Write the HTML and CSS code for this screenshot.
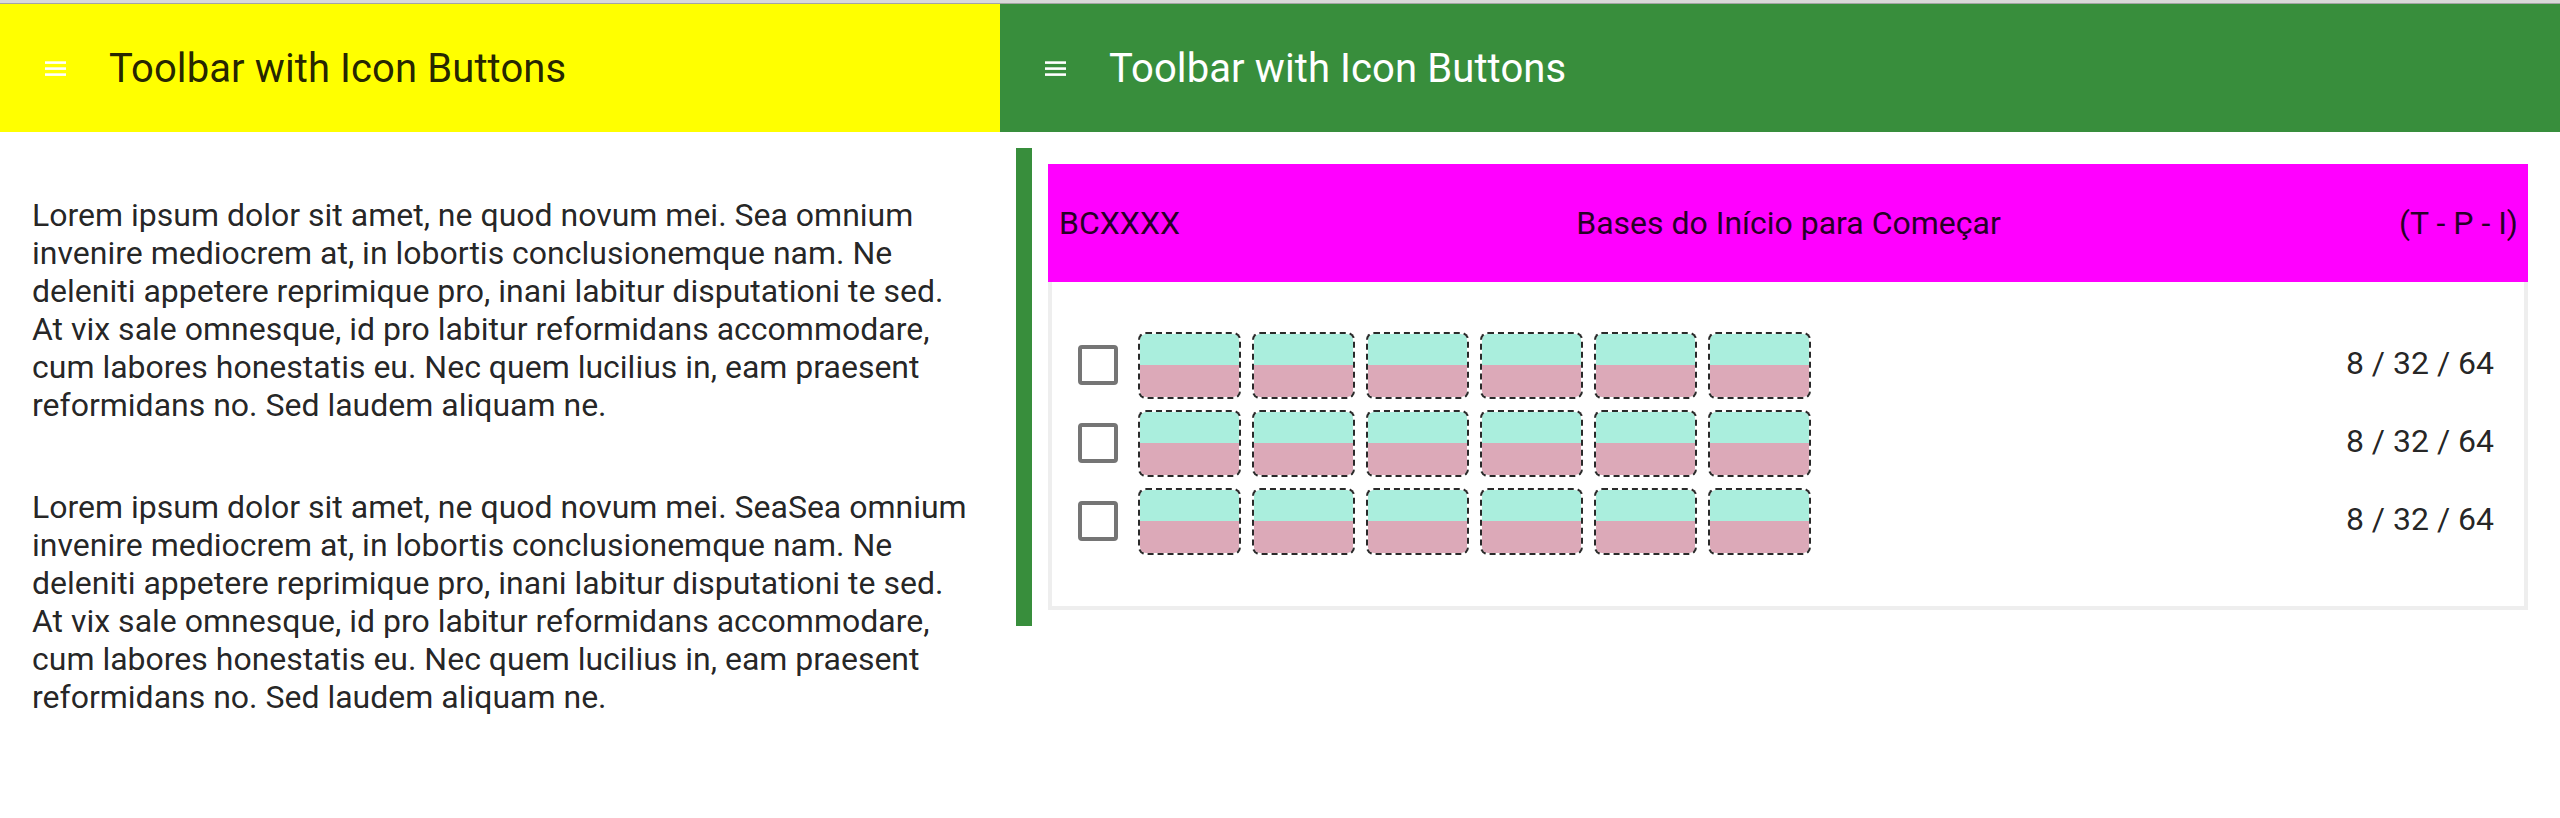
FILE: index.html
```html
<!DOCTYPE html>
<html lang="pt">
<head>
<meta charset="utf-8">
<title>Toolbar with Icon Buttons</title>
<link rel="stylesheet" href="styles.css">
</head>
<body>
<div class="frame-top"></div>
<div class="app">
  <section class="pane pane-left">
    <header class="toolbar toolbar-yellow">
      <svg class="menu-icon" viewBox="0 0 21 15" width="21" height="15" aria-hidden="true">
        <rect x="0" y="0.3" width="21" height="2.6"/>
        <rect x="0" y="6.3" width="21" height="2.6"/>
        <rect x="0" y="12.3" width="21" height="2.6"/>
      </svg>
      <span class="toolbar-title">Toolbar with Icon Buttons</span>
    </header>
    <div class="text-content">
      <p>Lorem ipsum dolor sit amet, ne quod novum mei. Sea omnium invenire mediocrem at, in lobortis conclusionemque nam. Ne deleniti appetere reprimique pro, inani labitur disputationi te sed. At vix sale omnesque, id pro labitur reformidans accommodare, cum labores honestatis eu. Nec quem lucilius in, eam praesent reformidans no. Sed laudem aliquam ne.</p>
      <p>Lorem ipsum dolor sit amet, ne quod novum mei. SeaSea omnium invenire mediocrem at, in lobortis conclusionemque nam. Ne deleniti appetere reprimique pro, inani labitur disputationi te sed. At vix sale omnesque, id pro labitur reformidans accommodare, cum labores honestatis eu. Nec quem lucilius in, eam praesent reformidans no. Sed laudem aliquam ne.</p>
    </div>
  </section>
  <section class="pane pane-right">
    <header class="toolbar toolbar-green">
      <svg class="menu-icon" viewBox="0 0 21 15" width="21" height="15" aria-hidden="true">
        <rect x="0" y="0.3" width="21" height="2.6"/>
        <rect x="0" y="6.3" width="21" height="2.6"/>
        <rect x="0" y="12.3" width="21" height="2.6"/>
      </svg>
      <span class="toolbar-title">Toolbar with Icon Buttons</span>
    </header>
    <div class="course-list">
      <article class="course-card">
        <div class="course-head">
          <span class="course-code">BCXXXX</span>
          <span class="course-name">Bases do Início para Começar</span>
          <span class="course-tpi">(T - P - I)</span>
        </div>
        <div class="course-body">
          <div class="course-row">
            <span class="checkbox"></span>
            <div class="tiles">
              <span class="tile"></span><span class="tile"></span><span class="tile"></span><span class="tile"></span><span class="tile"></span><span class="tile"></span>
            </div>
            <span class="credits">8 / 32 / 64</span>
          </div>
          <div class="course-row">
            <span class="checkbox"></span>
            <div class="tiles">
              <span class="tile"></span><span class="tile"></span><span class="tile"></span><span class="tile"></span><span class="tile"></span><span class="tile"></span>
            </div>
            <span class="credits">8 / 32 / 64</span>
          </div>
          <div class="course-row">
            <span class="checkbox"></span>
            <div class="tiles">
              <span class="tile"></span><span class="tile"></span><span class="tile"></span><span class="tile"></span><span class="tile"></span><span class="tile"></span>
            </div>
            <span class="credits">8 / 32 / 64</span>
          </div>
        </div>
      </article>
    </div>
  </section>
</div>
</body>
</html>
```

FILE: styles.css
```css
html, body {
  margin: 0;
  padding: 0;
  background: #ffffff;
}

body {
  font-family: Roboto, "Liberation Sans", sans-serif;
  color: rgba(0, 0, 0, 0.87);
}

.frame-top {
  height: 3px;
  background: #d9d9d9;
  border-bottom: 1px solid #a4a4a4;
}

.app {
  display: flex;
  align-items: flex-start;
}

.pane-left {
  flex: 0 0 1000px;
  width: 1000px;
}

.pane-right {
  flex: 1 1 auto;
  min-width: 0;
}

.toolbar {
  height: 128px;
  display: flex;
  align-items: center;
  gap: 43px;
  padding-left: 45px;
  box-sizing: border-box;
}

.toolbar-yellow {
  background: #ffff00;
  color: rgba(0, 0, 0, 0.87);
}

.toolbar-green {
  background: #388e3c;
  color: #ffffff;
}

.menu-icon {
  display: block;
  flex: none;
  fill: #ffffff;
}

.toolbar-title {
  font-size: 40px;
  font-weight: 400;
  line-height: normal;
  letter-spacing: 0.1px;
  white-space: nowrap;
}

.text-content {
  display: flex;
  flex-direction: column;
  gap: 64px;
  padding: 64px 32px 0 32px;
}

.text-content p {
  margin: 0;
  font-size: 32px;
  line-height: normal;
  color: rgba(0, 0, 0, 0.87);
}

.course-list {
  margin: 16px;
  border-left: 16px solid #388e3c;
  padding: 16px;
}

.course-card {
  display: flex;
  flex-direction: column;
}

.course-head {
  background: #ff00ff;
  display: grid;
  grid-template-columns: 1fr auto 1fr;
  align-items: center;
  padding: 40px 10px 40px 11px;
  font-size: 32px;
  line-height: normal;
  color: rgba(0, 0, 0, 0.87);
}

.course-code {
  justify-self: start;
}

.course-name {
  justify-self: center;
}

.course-tpi {
  justify-self: end;
}

.course-body {
  border: 4px solid #eeeeee;
  border-top: 0;
  padding: 44px 30px 46px 26px;
  display: flex;
  flex-direction: column;
}

.course-row {
  height: 78px;
  display: flex;
  align-items: center;
}

.checkbox {
  flex: none;
  width: 40px;
  height: 40px;
  box-sizing: border-box;
  border: 4px solid #757575;
  border-radius: 4px;
  margin-right: 20px;
}

.tiles {
  display: flex;
  gap: 11px;
}

.tile {
  display: block;
  width: 103px;
  height: 67px;
  box-sizing: border-box;
  border: 2px dashed #2a2a2a;
  border-radius: 8px;
  background: linear-gradient(to bottom, #aaeedd 50%, #dca9b8 50%);
  background-clip: padding-box;
}

.credits {
  margin-left: auto;
  margin-bottom: 4px;
  font-size: 32px;
  line-height: normal;
  color: rgba(0, 0, 0, 0.87);
  white-space: nowrap;
}
```
